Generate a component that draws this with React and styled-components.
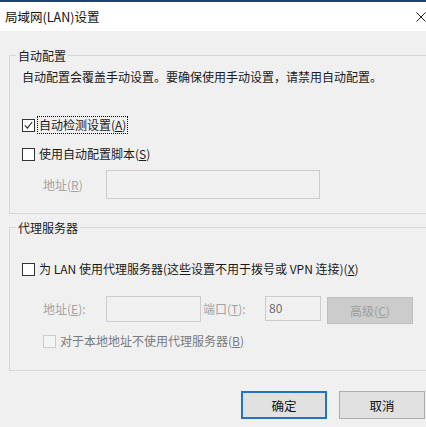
import React from "react";
import styled, { createGlobalStyle } from "styled-components";

const Global = createGlobalStyle`
  html, body { margin: 0; padding: 0; background: #f0f0f0; }
  body { overflow: hidden; }
`;

const Window = styled.div`
  width: 426px;
  height: 427px;
  overflow: hidden;
  background: #f0f0f0;
  font-family: "Noto Sans CJK SC", "Microsoft YaHei", "Noto Sans", sans-serif;
  font-size: 12px;
  color: #1a1a1a;
  box-sizing: border-box;
`;

const TitleBar = styled.div`
  height: 29px;
  border-top: 2px solid #1f416b;
  background: #ffffff;
  display: flex;
  align-items: center;
  justify-content: space-between;
  padding-left: 5px;
  font-size: 12.5px;
  color: #111;
`;

const CloseIcon = styled.svg`
  width: 10px;
  height: 10px;
  margin-right: 0px;
  margin-top: 1px;
  flex: none;
`;

const Body = styled.div`
  padding: 16px 0 0 9px;
`;

const Group = styled.fieldset`
  margin: ${(p) => (p.$first ? "0" : "5px")} -20px 0 0;
  padding: 0;
  border: 1px solid #d7d7d7;
  min-width: 0;
`;

const Legend = styled.legend`
  margin-left: 6px;
  padding: 0 2px;
  line-height: 17px;
  font-size: 12px;
  color: #1a1a1a;
`;

const Inner = styled.div`
  padding: 0 0 ${(p) => p.$pb}px 12px;
`;

const Desc = styled.div`
  margin-top: 4px;
  line-height: 17px;
  white-space: nowrap;
`;

const Row = styled.div`
  display: flex;
  align-items: ${(p) => p.$align || "center"};
  margin-top: ${(p) => p.$mt}px;
  margin-left: ${(p) => p.$indent || 0}px;
  height: ${(p) => p.$h || 18}px;
  white-space: nowrap;
`;

const Box = styled.span`
  width: 11px;
  height: 11px;
  border: 1px solid ${(p) => (p.$disabled ? "#cdcdcd" : "#333333")};
  background: ${(p) => (p.$disabled ? "#f4f4f4" : "#ffffff")};
  display: inline-flex;
  align-items: center;
  justify-content: center;
  flex: none;
`;

const CheckLabel = styled.span`
  margin-left: 2px;
  padding: 0 1px;
  line-height: 16px;
  border: 1px ${(p) => (p.$focus ? "dotted #000" : "solid transparent")};
  color: ${(p) => (p.$disabled ? "#7a7a7a" : "#1a1a1a")};
`;

const U = styled.span`
  text-decoration: underline;
  text-underline-offset: 1px;
`;

const FieldLabel = styled.span`
  width: ${(p) => p.$w}px;
  padding-left: ${(p) => p.$pl || 0}px;
  box-sizing: border-box;
  color: #a3a3a3;
  flex: none;
  line-height: 17px;
`;

const TextBox = styled.div`
  width: ${(p) => p.$w}px;
  height: ${(p) => p.$h}px;
  box-sizing: border-box;
  border: 1px solid #cccccc;
  background: #f0f0f0;
  color: #6d6d6d;
  padding: 2px 3px;
  line-height: 17px;
  flex: none;
`;

const DisabledButton = styled.div`
  margin-left: 6px;
  margin-top: 1px;
  width: 86px;
  height: 27px;
  box-sizing: border-box;
  background: #cccccc;
  border: 1px solid #bfbfbf;
  color: #9d9d9d;
  display: flex;
  align-items: center;
  justify-content: center;
  flex: none;
`;

const Footer = styled.div`
  display: flex;
  justify-content: flex-end;
  gap: 12px;
  margin-top: 20px;
  padding-right: 1px;
`;

const Button = styled.div`
  width: 86px;
  height: 28px;
  box-sizing: border-box;
  background: #e1e1e1;
  border: ${(p) => (p.$default ? "2px solid #1f74c4" : "1px solid #adadad")};
  display: flex;
  align-items: center;
  justify-content: center;
  color: #111;
  font-size: 12.5px;
`;

function Check({ checked, disabled, focus, children }) {
  return (
    <>
      <Box $disabled={disabled}>
        {checked && (
          <svg width="9" height="9" viewBox="0 0 9 9">
            <path d="M0.8 4.4 L3.4 7.2 L8.2 1" fill="none" stroke="#222" strokeWidth="1.1" />
          </svg>
        )}
      </Box>
      <CheckLabel $focus={focus} $disabled={disabled}>
        {children}
      </CheckLabel>
    </>
  );
}

export default function App() {
  return (
    <>
      <Global />
      <Window>
        <TitleBar>
          <span>局域网(LAN)设置</span>
          <CloseIcon viewBox="0 0 10 10">
            <path d="M0.5 0.5 L9.5 9.5 M9.5 0.5 L0.5 9.5" stroke="#222" strokeWidth="1" />
          </CloseIcon>
        </TitleBar>
        <Body>
          <Group $first>
            <Legend>自动配置</Legend>
            <Inner $pb={14}>
              <Desc>自动配置会覆盖手动设置。要确保使用手动设置，请禁用自动配置。</Desc>
              <Row $mt={31}>
                <Check checked focus>
                  自动检测设置(<U>A</U>)
                </Check>
              </Row>
              <Row $mt={11}>
                <Check>
                  使用自动配置脚本(<U>S</U>)
                </Check>
              </Row>
              <Row $mt={7} $h={29} $indent={21}>
                <FieldLabel $w={63}>
                  地址(<U>R</U>)
                </FieldLabel>
                <TextBox $w={214} $h={29} />
              </Row>
            </Inner>
          </Group>
          <Group>
            <Legend>代理服务器</Legend>
            <Inner $pb={20}>
              <Row $mt={24}>
                <Check>
                  为 LAN 使用代理服务器(这些设置不用于拨号或 VPN 连接)(<U>X</U>)
                </Check>
              </Row>
              <Row $mt={18} $h={28} $indent={21} $align="flex-start">
                <FieldLabel $w={63} style={{ marginTop: 4 }}>
                  地址(<U>E</U>):
                </FieldLabel>
                <TextBox $w={95} $h={26} />
                <FieldLabel $w={64} $pl={2} style={{ marginTop: 4 }}>
                  端口(<U>T</U>):
                </FieldLabel>
                <TextBox $w={56} $h={25}>80</TextBox>
                <DisabledButton>
                  高级(<U>C</U>)
                </DisabledButton>
              </Row>
              <Row $mt={8} $indent={21}>
                <Check disabled>
                  对于本地地址不使用代理服务器(<U>B</U>)
                </Check>
              </Row>
            </Inner>
          </Group>
          <Footer>
            <Button $default>确定</Button>
            <Button>取消</Button>
          </Footer>
        </Body>
      </Window>
    </>
  );
}
